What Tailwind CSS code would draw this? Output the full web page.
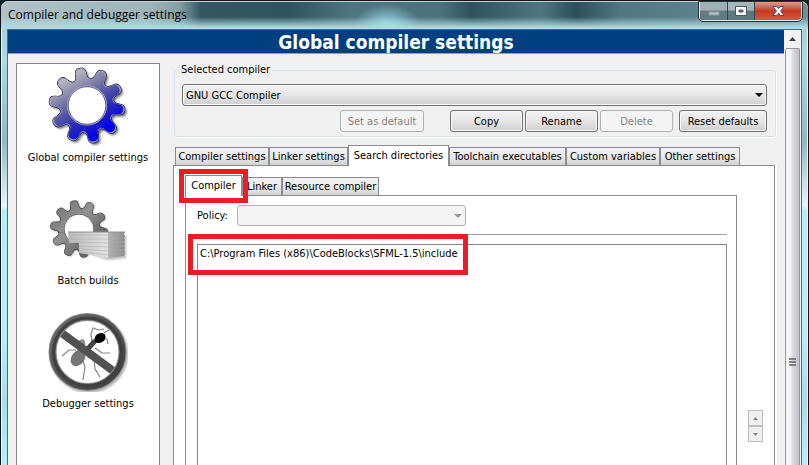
<!DOCTYPE html>
<html lang="en">
<head>
    <meta charset="UTF-8">
    <meta name="viewport" content="width=device-width, initial-scale=1.0">
    <title>Compiler and debugger settings</title>
    <script src="https://cdn.jsdelivr.net/npm/@tailwindcss/browser@4"></script>
</head>
<body class="min-h-screen flex flex-col overflow-hidden bg-[#10242b] font-['DejaVu_Sans_Condensed','DejaVu_Sans',sans-serif] text-[11px] leading-[14px] text-black">
    <div class="flex-1 flex flex-col rounded-t-lg border-x border-t border-[#10161c] bg-[linear-gradient(180deg,#a9c9d2_0px,#a9dbe8_60px,#8fb9c6_140px,#e4f7fc_205px,#b5ebfb_210px,#b5effd_330px,#a8dcec_400px,#b5effd_465px)]">

        <!-- Title bar -->
        <header class="h-7 shrink-0 flex items-start justify-between rounded-t-lg border-t border-[#c3d3d7] pl-[7px] pr-[6px] bg-[linear-gradient(180deg,transparent_55%,#a8dce9_95%),radial-gradient(ellipse_34px_22px_at_386px_24px,#9fdcec_0%,transparent_100%),linear-gradient(90deg,#b2c2c5_0px,#9db4b9_150px,#86a0a6_178px,#33565f_200px,#30545d_290px,#4e7680_350px,#4b727c_440px,#2f525c_470px,#4f7680_540px,#2c4f58_575px,#527780_620px,#6a8f98_800px)]">
            <h2 class="pt-[3px] font-['Open_Sans',sans-serif] text-[12px] leading-5">Compiler and debugger settings</h2>
            <div class="flex h-[19px] rounded-b border border-t-0 border-[#dbe6e8] outline outline-[#26343a]">
                <button aria-label="Minimize" class="w-7 flex items-center justify-center border-r border-[#33474e] bg-linear-to-b from-[#9fb0b4] from-45% to-[#627b83] to-50%">
                    <svg class="w-3 h-3" viewBox="0 0 12 12"><path d="M1 7h10v3H1z" fill="#b6bfc1" stroke="#8b999d"/></svg>
                </button>
                <button aria-label="Maximize" class="w-[27px] flex items-center justify-center border-r border-[#33474e] bg-linear-to-b from-[#a5b6ba] from-45% to-[#5d7780] to-50%">
                    <svg class="w-3 h-3" viewBox="0 0 12 12"><path fill-rule="evenodd" d="M.5 1.500h11v9H.5zM4 5h4v2H4z" fill="#fff" stroke="#4b5560"/></svg>
                </button>
                <button aria-label="Close" class="w-[46px] flex items-center justify-center rounded-br bg-linear-to-b from-[#dc9a8c] via-[#c4371f] via-50% to-[#d9583a]">
                    <svg class="w-[13px] h-3" viewBox="0 0 13 12"><path d="M1 1.500h3.500l2 2.200 2-2.200H12L8.600 6l3.400 4.500H8.500l-2-2.300-2 2.300H1L4.400 6z" fill="#fff" stroke="#5c4450"/></svg>
                </button>
            </div>
        </header>

        <div class="flex-1 flex flex-col px-[6px] shadow-[inset_1px_0_#e8f8fc,inset_-1px_0_#e8f8fc]">
            <div class="flex-1 flex border border-b-0 border-[#526a75] bg-[#f0f0f0]">

                <div class="flex-1 min-w-0 flex flex-col">
                    <h1 class="h-6 shrink-0 bg-[#004080] border-b border-[#a0a0a0] text-center text-[19px] leading-6 font-bold text-white">Global compiler settings</h1>

                    <div class="flex-1 flex gap-[13px] px-2 pt-[9px]">
                        <!-- Categories -->
                        <nav class="w-36 shrink-0 flex flex-col items-center gap-6 bg-white border border-b-0 border-[#828790] pt-[2px]">
                            <a href="#global" class="flex flex-col items-center gap-[5px]">
                                <svg class="w-20 h-20" viewBox="0 0 80 80">
                                    <defs>
                                        <path id="tooth" d="M0 0L-8.300-25.700C-5-26.800-5.600-30-5.200-33.500C-4.800-39.500 4.800-39.500 5.200-33.500C5.600-30 5-26.800 8.300-25.700Z"/>
                                        <g id="gear">
                                            <use href="#tooth"/>
                                            <use href="#tooth" transform="rotate(36)"/>
                                            <use href="#tooth" transform="rotate(72)"/>
                                            <use href="#tooth" transform="rotate(108)"/>
                                            <use href="#tooth" transform="rotate(144)"/>
                                            <use href="#tooth" transform="rotate(180)"/>
                                            <use href="#tooth" transform="rotate(216)"/>
                                            <use href="#tooth" transform="rotate(252)"/>
                                            <use href="#tooth" transform="rotate(288)"/>
                                            <use href="#tooth" transform="rotate(324)"/>
                                        </g>
                                        <clipPath id="gearClip">
                                            <use href="#tooth"/>
                                            <use href="#tooth" transform="rotate(36)"/>
                                            <use href="#tooth" transform="rotate(72)"/>
                                            <use href="#tooth" transform="rotate(108)"/>
                                            <use href="#tooth" transform="rotate(144)"/>
                                            <use href="#tooth" transform="rotate(180)"/>
                                            <use href="#tooth" transform="rotate(216)"/>
                                            <use href="#tooth" transform="rotate(252)"/>
                                            <use href="#tooth" transform="rotate(288)"/>
                                            <use href="#tooth" transform="rotate(324)"/>
                                        </clipPath>
                                        <mask id="hole" maskUnits="userSpaceOnUse" x="-45" y="-45" width="90" height="90">
                                            <rect x="-45" y="-45" width="90" height="90" fill="#fff"/>
                                            <circle r="19" fill="#000"/>
                                        </mask>
                                        <linearGradient id="blue" gradientUnits="userSpaceOnUse" x1="-16" y1="-30" x2="18" y2="26">
                                            <stop offset="0" stop-color="#b4b4bc"/>
                                            <stop offset=".35" stop-color="#6c6ca4"/>
                                            <stop offset=".7" stop-color="#2a2ab4"/>
                                            <stop offset="1" stop-color="#0000f0"/>
                                        </linearGradient>
                                        <linearGradient id="gray" gradientUnits="userSpaceOnUse" x1="-20" y1="-30" x2="18" y2="26">
                                            <stop offset="0" stop-color="#7c7c7c"/>
                                            <stop offset=".4" stop-color="#929292"/>
                                            <stop offset="1" stop-color="#606060"/>
                                        </linearGradient>
                                        <filter id="soft" x="-20%" y="-20%" width="140%" height="140%"><feGaussianBlur stdDeviation="1.300"/></filter>
                                        <filter id="fuzz"><feGaussianBlur stdDeviation=".6"/></filter>
                                    </defs>
                                    <g transform="translate(39 39.500)">
                                        <g transform="translate(2 2) rotate(-11)" mask="url(#hole)" filter="url(#soft)" opacity=".55"><use href="#gear"/></g>
                                        <g transform="rotate(-11)">
                                            <use href="#gear" stroke="#15151c" stroke-width="1"/>
                                            <g clip-path="url(#gearClip)">
                                                <rect x="-40" y="-40" width="80" height="80" fill="#a4a4cc"/>
                                            </g>
                                            <g transform="scale(.965)"><g clip-path="url(#gearClip)">
                                                <rect x="-42" y="-42" width="84" height="84" fill="url(#blue)" transform="rotate(11)"/>
                                            </g></g>
                                        </g>
                                        <circle r="19.600" fill="#fff" stroke="#a4a4d4"/>
                                        <circle r="18.800" fill="#fff" stroke="#3a3a4c" stroke-width=".8"/>
                                    </g>
                                </svg>
                                <span>Global compiler settings</span>
                            </a>
                            <a href="#batch" class="flex flex-col items-center gap-[5px]">
                                <svg class="w-20 h-20" viewBox="0 0 80 80">
                                    <defs>
                                        <linearGradient id="paper" x1="0" y1="0" x2="1" y2="0">
                                            <stop offset="0" stop-color="#b8b8b8"/>
                                            <stop offset="1" stop-color="#e2e2e2"/>
                                        </linearGradient>
                                        <linearGradient id="paperSide" x1="0" y1="0" x2="1" y2="0">
                                            <stop offset="0" stop-color="#b4b4b4"/>
                                            <stop offset="1" stop-color="#8c8c8c"/>
                                        </linearGradient>
                                    </defs>
                                    <path d="M32 62L60 71L78 69V46" fill="#777" opacity=".5" filter="url(#soft)"/>
                                    <g transform="translate(31 40) scale(.75) rotate(-11)" mask="url(#hole)">
                                        <use href="#gear" x="1" y="1" filter="url(#soft)" opacity=".45"/>
                                        <use href="#gear" stroke="#4a4a4a" stroke-width="1.500"/>
                                        <g clip-path="url(#gearClip)"><rect x="-40" y="-40" width="80" height="80" fill="url(#gray)"/></g>
                                        <circle r="19.500" fill="none" stroke="#5a5a5a"/>
                                    </g>
                                    <path d="M20 43H60V69L31 64V54H21z" fill="url(#paper)"/>
                                    <path d="M60 43H77L76 45L77 47L76 49L77 51L76 53L77 55L76 57L77 59L76 61L77 63L76 67L60 69z" fill="url(#paperSide)"/>
                                    <path d="M20 43h57" stroke="#8e8e8e" fill="none"/>
                                    <path d="M21 46h39l16-1M21 50h39l16-1M22 53l38 1 16-1M31 57l29 1 16-1M31 60l29 2 16-1M31 63l29 3 16-2" stroke="#aaa" stroke-width=".5" fill="none"/>
                                </svg>
                                <span>Batch builds</span>
                            </a>
                            <a href="#debugger" class="flex flex-col items-center gap-[5px]">
                                <svg class="w-20 h-20" viewBox="0 0 80 80">
                                    <defs>
                                        <linearGradient id="ring" x1="0" y1="0" x2="1" y2="1">
                                            <stop offset="0" stop-color="#6a6a6a"/>
                                            <stop offset="1" stop-color="#3c3c3c"/>
                                        </linearGradient>
                                    </defs>
                                    <circle cx="41" cy="42" r="36" fill="none" stroke="#666" stroke-width="6" opacity=".5" filter="url(#soft)"/>
                                    <circle cx="39.500" cy="40" r="35" fill="#fff"/>
                                    <g filter="url(#fuzz)">
                                        <path d="M28 38L21 38L14 44M34 46L37 55L35 68M46 48L47 57L52 65M47 36L54 41L62 41M44 30L43 22L45 16L51 18L56 17M54 27L59 27L60 32M56 21L61 18" fill="none" stroke="#858585" stroke-width="1.200"/>
                                        <ellipse cx="30" cy="46" rx="9" ry="6.500" transform="rotate(-55 30 46)" fill="#747474"/>
                                        <ellipse cx="33" cy="33" rx="4" ry="6" transform="rotate(20 33 33)" fill="#8a8a8a"/>
                                        <path d="M37 40L46 30" stroke="#444" stroke-width="5" stroke-linecap="round"/>
                                        <ellipse cx="52" cy="26" rx="6" ry="4.500" transform="rotate(-35 52 26)"/>
                                    </g>
                                    <path d="M11 19L68 61" stroke="#525252" stroke-width="8"/>
                                    <circle cx="39.500" cy="40" r="35" fill="none" stroke="#8a8a8a" stroke-width="8"/>
                                    <circle cx="39.500" cy="40" r="35" fill="none" stroke="url(#ring)" stroke-width="6"/>
                                    <circle cx="39.500" cy="40" r="34" fill="none" stroke="#404040" stroke-width="3" filter="url(#fuzz)"/>
                                </svg>
                                <span>Debugger settings</span>
                            </a>
                        </nav>

                        <main class="flex-1 min-w-0 flex flex-col">
                            <fieldset class="ml-px rounded-[3px] border border-[#d5dfe5] pl-[7px] pr-2 pb-1 shadow-[1px_1px_#fff]">
                                <legend class="px-[2px] -ml-[3px]">Selected compiler</legend>
                                <div class="relative mt-[7px]">
                                    <select aria-label="Selected compiler" class="block w-full h-[22px] appearance-none rounded-[3px] border border-[#707070] pl-[3px] pt-px bg-linear-to-b from-[#f2f2f2] via-[#e6e6e6] via-50% to-[#cfcfcf] shadow-[inset_0_0_0_1px_#f8f8f8]">
                                        <option>GNU GCC Compiler</option>
                                    </select>
                                    <svg class="absolute right-1 top-[9px] w-2 h-1 pointer-events-none" viewBox="0 0 8 4"><path d="M0 0h8L4 4z"/></svg>
                                </div>
                                <div class="mt-1 flex justify-end gap-[2px]">
                                    <button disabled class="w-[84px] h-[22px] pt-px mr-6 rounded-[3px] border border-[#adb2b5] bg-[#f4f4f4] text-[#838383]">Set as default</button>
                                    <button class="w-[73px] h-[22px] pt-px rounded-[3px] border border-[#707070] bg-linear-to-b from-[#f2f2f2] via-[#e6e6e6] via-50% to-[#cfcfcf] shadow-[inset_0_0_0_1px_#f8f8f8]">Copy</button>
                                    <button class="w-[73px] h-[22px] pt-px rounded-[3px] border border-[#707070] bg-linear-to-b from-[#f2f2f2] via-[#e6e6e6] via-50% to-[#cfcfcf] shadow-[inset_0_0_0_1px_#f8f8f8]">Rename</button>
                                    <button disabled class="w-[73px] h-[22px] pt-px rounded-[3px] border border-[#adb2b5] bg-[#f4f4f4] text-[#838383]">Delete</button>
                                    <button class="w-[88px] h-[22px] pt-px ml-1 rounded-[3px] border border-[#707070] bg-linear-to-b from-[#f2f2f2] via-[#e6e6e6] via-50% to-[#cfcfcf] shadow-[inset_0_0_0_1px_#f8f8f8]">Reset defaults</button>
                                </div>
                            </fieldset>

                            <div role="tablist" class="mt-2 pl-[2px] flex items-end whitespace-nowrap">
                                <button role="tab" class="w-[94px] h-[18px] pt-px border border-b-0 border-[#898c95] bg-linear-to-b from-[#f2f2f2] via-[#ebebeb] via-50% to-[#d2d2d2]">Compiler settings</button>
                                <button role="tab" class="w-[79px] h-[18px] pt-px border border-b-0 border-[#898c95] bg-linear-to-b from-[#f2f2f2] via-[#ebebeb] via-50% to-[#d2d2d2]">Linker settings</button>
                                <button role="tab" aria-selected="true" class="relative w-[101px] h-[21px] -mb-px pb-px border border-b-0 border-[#898c95] bg-white">Search directories</button>
                                <button role="tab" class="w-[117px] h-[18px] pt-px border border-b-0 border-[#898c95] bg-linear-to-b from-[#f2f2f2] via-[#ebebeb] via-50% to-[#d2d2d2]">Toolchain executables</button>
                                <button role="tab" class="w-[94px] h-[18px] pt-px border border-b-0 border-[#898c95] bg-linear-to-b from-[#f2f2f2] via-[#ebebeb] via-50% to-[#d2d2d2]">Custom variables</button>
                                <button role="tab" class="w-[80px] h-[18px] pt-px border border-b-0 border-[#898c95] bg-linear-to-b from-[#f2f2f2] via-[#ebebeb] via-50% to-[#d2d2d2]">Other settings</button>
                            </div>

                            <section class="flex-1 mr-px flex gap-[11px] border border-b-0 border-[#898c95] bg-white px-[11px] pt-[9px] shadow-[2px_0_#fff]">
                                <div class="flex-1 min-w-0 flex flex-col">
                                    <div role="tablist" class="flex items-end whitespace-nowrap">
                                        <button role="tab" aria-selected="true" class="relative z-10 w-[57px] h-[21px] -mb-px pb-px border border-b-0 border-[#898c95] bg-white">
                                            Compiler
                                            <span class="absolute -inset-x-[7px] -inset-y-[7px] border-5 border-[#ed1c24]"></span>
                                        </button>
                                        <button role="tab" class="w-10 h-[18px] pt-px border border-b-0 border-[#898c95] bg-linear-to-b from-[#f2f2f2] via-[#ebebeb] via-50% to-[#d2d2d2]">Linker</button>
                                        <button role="tab" class="w-[97px] h-[18px] pt-px border border-b-0 border-[#898c95] bg-linear-to-b from-[#f2f2f2] via-[#ebebeb] via-50% to-[#d2d2d2]">Resource compiler</button>
                                    </div>

                                    <div class="flex-1 flex flex-col border border-b-0 border-[#898c95] pl-[11px] pr-[9px] pt-[9px]">
                                        <div class="flex items-center">
                                            <label for="policy" class="w-10 pt-px">Policy:</label>
                                            <div class="relative w-[229px]">
                                                <select id="policy" disabled class="block w-full h-[21px] appearance-none rounded-[3px] border border-[#adb2b5] bg-[#f4f4f4]"></select>
                                                <svg class="absolute right-1 top-[9px] w-2 h-1" viewBox="0 0 8 4"><path d="M0 0h8L4 4z" fill="#969696"/></svg>
                                            </div>
                                        </div>
                                        <hr class="mt-2 border-[#a0a0a0]">
                                        <div class="relative flex-1 flex mt-[9px]">
                                            <select size="2" aria-label="Search directories" class="flex-1 appearance-none border border-b-0 border-[#828790] bg-white pl-[2px] pt-[2px]">
                                                <option>C:\Program Files (x86)\CodeBlocks\SFML-1.5\include</option>
                                            </select>
                                            <span class="absolute -left-[9px] -top-[10px] w-[280px] h-[41px] border-5 border-[#ed1c24]"></span>
                                        </div>
                                    </div>
                                </div>
                                <div class="w-[15px] flex flex-col justify-end pb-[23px]">
                                    <button aria-label="Move up" class="h-4 flex items-center justify-center border border-[#bcbcbc] bg-[#f0f0f0]">
                                        <svg class="w-[5px] h-[3px]" viewBox="0 0 5 3"><path d="M0 3h5L2.500 0z" fill="#808080"/></svg>
                                    </button>
                                    <button aria-label="Move down" class="h-4 flex items-center justify-center border border-[#bcbcbc] bg-[#f0f0f0]">
                                        <svg class="w-[5px] h-[3px]" viewBox="0 0 5 3"><path d="M0 0h5L2.500 3z" fill="#808080"/></svg>
                                    </button>
                                </div>
                            </section>
                        </main>
                    </div>
                </div>

                <!-- Scroll bar -->
                <div class="w-[17px] shrink-0 flex flex-col px-px bg-[#f3f3f3]">
                    <div class="h-[18px] flex items-center justify-center">
                        <svg class="w-[7px] h-1" viewBox="0 0 7 4"><path d="M0 4h7L3.500 0z" fill="#404040"/></svg>
                    </div>
                    <div class="flex-1 flex justify-center rounded-t-[2px] border border-b-0 border-[#979797] bg-linear-to-r from-[#f5f5f5] from-35% via-[#dedee0] via-50% to-[#c2c2c6] pt-[309px]">
                        <svg class="w-[7px] h-2" viewBox="0 0 7 8"><path d="M0 1h7M0 4h7M0 7h7" stroke="#5c5c5c" stroke-width="1.500"/></svg>
                    </div>
                </div>
            </div>
        </div>
    </div>
</body>
</html>
